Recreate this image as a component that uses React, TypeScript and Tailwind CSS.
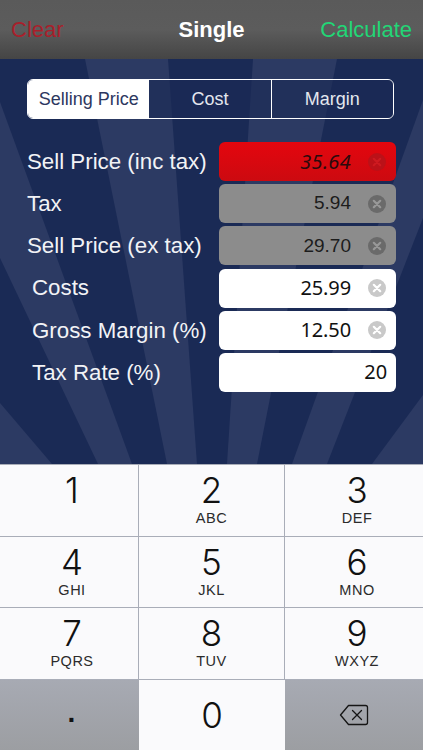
const sans = "font-['Liberation_Sans',Arial,sans-serif]";

const rays = [
  "0,403 52,464 0,464",
  "0,258 98,464 132,464 0,102",
  "85,59 168,59 197,464 167,464",
  "253,59 337,59 257,464 227,464",
  "423,100 292,464 327,464 423,218",
  "372,464 423,395 423,464",
];

type Field = {
  label: string;
  value: string;
  indent?: boolean;
  tone: "red" | "gray" | "white";
  clear?: boolean;
};

const fields: Field[] = [
  { label: "Sell Price (inc tax)", value: "35.64", tone: "red", clear: true },
  { label: "Tax", value: "5.94", tone: "gray", clear: true },
  { label: "Sell Price (ex tax)", value: "29.70", tone: "gray", clear: true },
  { label: "Costs", value: "25.99", indent: true, tone: "white", clear: true },
  { label: "Gross Margin (%)", value: "12.50", indent: true, tone: "white", clear: true },
  { label: "Tax Rate (%)", value: "20", indent: true, tone: "white" },
];

const keys = [
  ["1", ""],
  ["2", "ABC"],
  ["3", "DEF"],
  ["4", "GHI"],
  ["5", "JKL"],
  ["6", "MNO"],
  ["7", "PQRS"],
  ["8", "TUV"],
  ["9", "WXYZ"],
];

function ClearIcon({ circle, cross }: { circle: string; cross: string }) {
  return (
    <svg width="18" height="18" viewBox="0 0 18 18" className="shrink-0">
      <circle cx="9" cy="9" r="9" fill={circle} />
      <path d="M5.8 5.8l6.4 6.4M12.2 5.8l-6.4 6.4" stroke={cross} strokeWidth="2.2" strokeLinecap="round" />
    </svg>
  );
}

function ValueField({ field }: { field: Field }) {
  const box = {
    red: "bg-gradient-to-b from-[#e4060e] to-[#cc0a10]",
    gray: "bg-[#8c8c8c]",
    white: "bg-white",
  }[field.tone];
  const text = {
    red: "font-['Noto_Sans',sans-serif] italic text-[20px] tracking-[0.3px] text-[#2a0a0c]",
    gray: `${sans} text-[19px] text-[#1c1c1c]`,
    white: "font-['Noto_Sans',sans-serif] text-[20px] text-[#111] tracking-[-0.1px]",
  }[field.tone];
  const circle = { red: "#bb1118", gray: "#6a6a6a", white: "#c9c9c9" }[field.tone];
  const cross = { red: "#cf1a20", gray: "#989898", white: "#ffffff" }[field.tone];

  return (
    <div className={`flex h-[39px] w-[177px] items-center justify-end rounded-[6px] ${field.clear ? "pr-[10px]" : "pr-[9px]"} ${box}`}>
      <span className={text}>{field.value}</span>
      {field.clear && (
        <span className="ml-[17px] flex">
          <ClearIcon circle={circle} cross={cross} />
        </span>
      )}
    </div>
  );
}

function Key({ digit, letters }: { digit: string; letters: string }) {
  return (
    <div className="flex flex-col items-center border-r border-b border-[#a9adb8] bg-[#fafafc] pt-[4px] [&:nth-child(3n)]:border-r-0 [&:nth-child(3n)]:pl-[6px] [&:nth-child(3n+1)]:pl-[6px]">
      <span className="font-['Inter',sans-serif] text-[35px] leading-[42px] font-light text-[#111]">{digit}</span>
      <span className={`${sans} -mt-[1px] text-[14.5px] leading-[16px] tracking-[0.5px] text-[#2b2b2b]`}>{letters}</span>
    </div>
  );
}

export default function App() {
  return (
    <div className={`flex h-[750px] w-[423px] flex-col overflow-hidden bg-[#1a2a55] ${sans}`}>
      <header className="flex h-[59px] shrink-0 items-center bg-gradient-to-b from-[#5a5a5a] via-[#5c5c5c] to-[#454545] px-[11px] text-[22px]">
        <span className="flex-1 text-[#a81f2b]">Clear</span>
        <span className="font-bold text-white">Single</span>
        <span className="flex-1 text-right text-[#22d676]">Calculate</span>
      </header>

      <main className="relative h-[405px] shrink-0">
        <svg className="absolute inset-0" width="423" height="405" viewBox="0 59 423 405">
          {rays.map((points) => (
            <polygon key={points} points={points} fill="#2c3a63" />
          ))}
        </svg>

        <div className="relative flex flex-col pt-[20px] pl-[27px]">
          <div className="flex h-[40px] w-[367px] overflow-hidden rounded-[6px] border border-white text-[18px] text-[#e4e7ee]">
            <div className="flex flex-1 items-center justify-center bg-white text-[#2d3760]">Selling Price</div>
            <div className="flex flex-1 items-center justify-center border-r border-white bg-[#1a2a55]/60">Cost</div>
            <div className="flex flex-1 items-center justify-center bg-[#1a2a55]/60">Margin</div>
          </div>

          <div className="mt-[23px] flex flex-col gap-[3.2px]">
            {fields.map((field) => (
              <div key={field.label} className="flex items-center">
                <span className={`w-[192px] text-[22.3px] whitespace-nowrap text-[#f2f3f6] ${field.indent ? "pl-[5px]" : ""}`}>
                  {field.label}
                </span>
                <ValueField field={field} />
              </div>
            ))}
          </div>
        </div>
      </main>

      <section className="grid flex-1 grid-cols-[139px_146px_138px] grid-rows-[72px_71px_72px_1fr] border-t border-[#a9adb8]">
        {keys.map(([digit, letters]) => (
          <Key key={digit} digit={digit} letters={letters} />
        ))}
        <div className="flex items-center justify-center bg-gradient-to-b from-[#a7aab3] to-[#9c9ea2]">
          <span className="mb-[4px] ml-[4px] text-[28px] leading-none font-bold text-[#111]">.</span>
        </div>
        <div className="flex items-center justify-center bg-[#fafafc]">
          <span className="font-['Inter',sans-serif] text-[35px] leading-[42px] font-light text-[#111]">0</span>
        </div>
        <div className="flex items-center justify-center bg-gradient-to-b from-[#a7aab3] to-[#9c9ea2]">
          <svg width="30" height="22" viewBox="0 0 30 22" fill="none" stroke="#151515" strokeWidth="1.3" strokeLinejoin="round" strokeLinecap="round">
            <path d="M1.5 11 L9.5 1.5 H26.5 A2 2 0 0 1 28.5 3.5 V18.5 A2 2 0 0 1 26.5 20.5 H9.5 Z" />
            <path d="M13.5 6.5 L22.5 15.5 M22.5 6.5 L13.5 15.5" />
          </svg>
        </div>
      </section>
    </div>
  );
}
